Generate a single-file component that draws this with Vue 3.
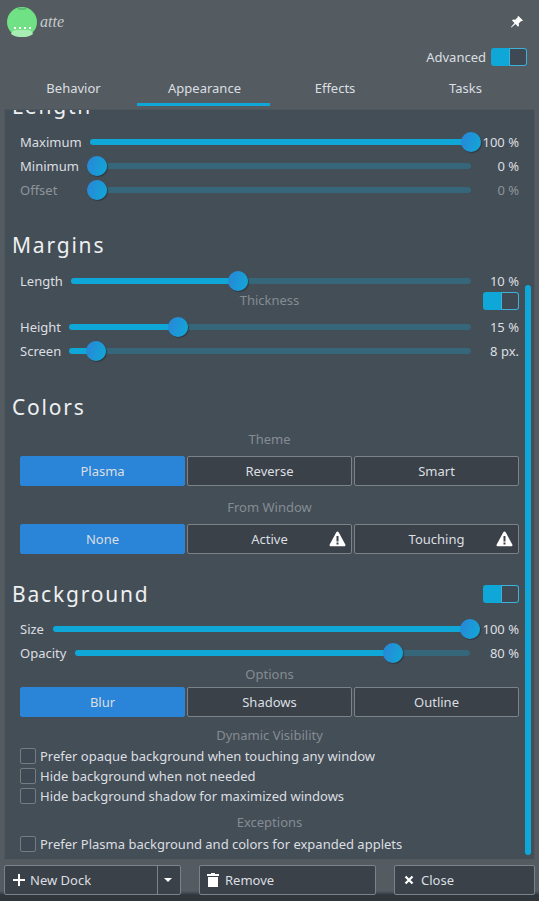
<template>
  <div class="fenetre">
    <!-- titre + épingle -->
    <div class="entete">
      <div class="logo">
        <svg width="32" height="32" viewBox="0 0 32 32">
          <circle cx="16" cy="16" r="15" fill="#70e285" />
          <path d="M11 2.500h10l-2 1h-6z" fill="#4f9c5c" />
          <path d="M5 28c1-3 3-4 5-4h12c2 0 4 1 5 4-3 2.500-7 3-11 3s-8-.5-11-3z" fill="#a8eeb4" />
          <g fill="#fff">
            <rect x="8" y="21" width="2" height="2" />
            <rect x="13" y="21" width="2" height="2" />
            <rect x="18" y="21" width="2" height="2" />
            <rect x="23" y="21" width="2" height="2" />
          </g>
        </svg>
        <span class="logo-texte">atte</span>
      </div>
      <svg class="epingle" width="14" height="14" viewBox="0 0 14 14">
        <path d="M8.500 1l4.500 4.500-1 .8-.8-.3-2.500 2.500.3 2.200-1 1-2.500-2.700L1.500 12.500 1 12l3.500-4L2 5.500l1-1 2.200.3L7.700 2.300 7.500 1.800z" fill="#fff" />
      </svg>
    </div>

    <div class="ligne-avance">
      <span>Advanced</span>
      <span class="bascule"><i></i></span>
    </div>

    <div class="onglets">
      <div v-for="o in onglets" :key="o" class="onglet" :class="{ actif: o === 'Appearance' }">{{ o }}</div>
    </div>

    <div class="panneau">
      <div class="defile">
        <h2 class="titre-length">Length</h2>
        <div v-for="s in sLength" :key="s.nom" class="curseur large" :class="{ inactif: s.off }">
          <span class="nom">{{ s.nom }}</span>
          <div class="piste">
            <div class="plein" :style="{ width: s.pos * 100 + '%' }"></div>
            <div class="poignee" :style="{ left: s.pos * 100 + '%' }"></div>
          </div>
          <span class="val">{{ s.val }}</span>
        </div>

        <h2 class="titre-margins">Margins</h2>
        <div class="curseur">
          <span class="nom">Length</span>
          <div class="piste">
            <div class="plein" :style="{ width: longueur * 100 + '%' }"></div>
            <div class="poignee" :style="{ left: longueur * 100 + '%' }"></div>
          </div>
          <span class="val">10 %</span>
        </div>
        <div class="ligne-thick">
          <span class="sous">Thickness</span>
          <span class="bascule"><i></i></span>
        </div>
        <div v-for="s in sMargins" :key="s.nom" class="curseur">
          <span class="nom">{{ s.nom }}</span>
          <div class="piste">
            <div class="plein" :style="{ width: s.pos * 100 + '%' }"></div>
            <div class="poignee" :style="{ left: s.pos * 100 + '%' }"></div>
          </div>
          <span class="val">{{ s.val }}</span>
        </div>

        <h2 class="titre-colors">Colors</h2>
        <div class="sous sous-theme">Theme</div>
        <div class="groupe">
          <div class="bouton on">Plasma</div>
          <div class="bouton">Reverse</div>
          <div class="bouton">Smart</div>
        </div>
        <div class="sous sous-window">From Window</div>
        <div class="groupe">
          <div class="bouton on">None</div>
          <div v-for="b in ['Active', 'Touching']" :key="b" class="bouton">
            {{ b }}
            <svg class="alerte" width="17" height="16" viewBox="0 0 17 16">
              <path d="M8.500.5c.5 0 .9.3 1.200.8l6.600 12.200c.4.800 0 1.800-1 1.800H1.700c-1 0-1.400-1-1-1.800L7.300 1.300c.3-.5.700-.8 1.200-.8z" fill="#fff" />
              <rect x="7.500" y="5" width="2" height="5.500" fill="#3a4149" />
              <rect x="7.500" y="11.500" width="2" height="2" fill="#3a4149" />
            </svg>
          </div>
        </div>

        <div class="ligne-bg">
          <h2>Background</h2>
          <span class="bascule"><i></i></span>
        </div>
        <div v-for="s in sBackground" :key="s.nom" class="curseur fond">
          <span class="nom">{{ s.nom }}</span>
          <div class="piste">
            <div class="plein" :style="{ width: s.pos * 100 + '%' }"></div>
            <div class="poignee" :style="{ left: s.pos * 100 + '%' }"></div>
          </div>
          <span class="val">{{ s.val }}</span>
        </div>
        <div class="sous sous-options">Options</div>
        <div class="groupe">
          <div class="bouton on">Blur</div>
          <div class="bouton">Shadows</div>
          <div class="bouton">Outline</div>
        </div>
        <div class="sous sous-dyn">Dynamic Visibility</div>
        <label v-for="c in cases" :key="c" class="case"><i></i>{{ c }}</label>
        <div class="sous sous-exc">Exceptions</div>
        <label class="case"><i></i>Prefer Plasma background and colors for expanded applets</label>
      </div>
      <div class="barre"></div>
    </div>

    <div class="pied">
      <div class="btn btn-new">
        <div class="btn-main">
          <svg width="14" height="14" viewBox="0 0 14 14"><path d="M6 1h2v5h5v2H8v5H6V8H1V6h5z" fill="#fff" /></svg>
          New Dock
        </div>
        <div class="btn-fleche"><span></span></div>
      </div>
      <div class="btn btn-remove">
        <svg width="14" height="14" viewBox="0 0 14 14">
          <path d="M5 0h4v1h4v2H1V1h4zM2 4h10v10H2z" fill="#fff" />
        </svg>
        Remove
      </div>
      <div class="btn btn-close">
        <svg width="10" height="10" viewBox="0 0 10 10">
          <path d="M1.500 1.500l7 7M8.500 1.500l-7 7" stroke="#fff" stroke-width="2.200" fill="none" />
        </svg>
        Close
      </div>
    </div>
  </div>
</template>

<script setup>
// Réglages de l'onglet Appearance ; pos = position de la poignée sur la piste
const onglets = ['Behavior', 'Appearance', 'Effects', 'Tasks']

const sLength = [
  { nom: 'Maximum', pos: 1, val: '100 %' },
  { nom: 'Minimum', pos: 0.018, val: '0 %' },
  { nom: 'Offset', pos: 0.018, val: '0 %', off: true },
]

const longueur = 0.4175

const sMargins = [
  { nom: 'Height', pos: 0.271, val: '15 %' },
  { nom: 'Screen', pos: 0.0675, val: '8 px.' },
]

const sBackground = [
  { nom: 'Size', pos: 1, val: '100 %' },
  { nom: 'Opacity', pos: 0.8046, val: '80 %' },
]

const cases = [
  'Prefer opaque background when touching any window',
  'Hide background when not needed',
  'Hide background shadow for maximized windows',
]
</script>

<style>
html,
body {
  margin: 0;
  background: #545c61;
}
</style>

<style scoped>
.fenetre {
  width: 539px;
  height: 901px;
  overflow: hidden;
  background: #545c61;
  font-family: "Noto Sans", sans-serif;
  font-size: 13px;
  color: #dcdfe1;
  display: flex;
  flex-direction: column;
  box-sizing: border-box;
}

.entete {
  height: 44px;
  padding: 6px 15px 0 6px;
  display: flex;
  justify-content: space-between;
  align-items: flex-start;
  box-sizing: border-box;
}

.logo {
  display: flex;
  align-items: center;
  height: 32px;
}

.logo-texte {
  font-family: "Liberation Serif", serif;
  font-style: italic;
  font-size: 16px;
  color: #c6cacc;
  margin-left: 2px;
  margin-top: -1px;
}

.epingle {
  margin-top: 9px;
}

.ligne-avance {
  height: 26px;
  padding-right: 12px;
  display: flex;
  justify-content: flex-end;
  align-items: center;
  gap: 5px;
}

.bascule {
  width: 36px;
  height: 18px;
  box-sizing: border-box;
  background: #0fa7d8;
  border-radius: 3px;
  display: flex;
  justify-content: flex-end;
  overflow: hidden;
}

.bascule i {
  width: 18px;
  height: 18px;
  box-sizing: border-box;
  border: 1px solid #3fb2dc;
  background: #3f4954;
  border-radius: 0 3px 3px 0;
}

.onglets {
  height: 39px;
  padding: 0 8px 0 8px;
  display: grid;
  grid-template-columns: 129px 133px 130px 131px;
  box-sizing: border-box;
}

.onglet {
  text-align: center;
  line-height: 36px;
  box-sizing: border-box;
}

.onglet:nth-child(-n + 2) {
  padding-left: 2px;
}

.onglet.actif {
  border-bottom: 3px solid #0fa7d8;
  height: 36px;
  line-height: 37px;
}

.panneau {
  position: relative;
  height: 751px;
  margin: 0 4px;
  background: #444e57;
  border: 1px solid #4d565c;
  border-bottom-color: #525a60;
  box-sizing: border-box;
  overflow: hidden;
}

.defile {
  /* contenu défilé : le titre du haut est coupé */
  margin-top: -18px;
  padding: 0 15px 0 7px;
}

h2 {
  margin: 0;
  font-weight: 400;
  font-size: 21px;
  line-height: 28px;
  letter-spacing: 1.8px;
  color: #eef0f1;
}

.titre-length {
  margin-bottom: 10px;
}

.titre-margins {
  margin-top: 29px;
  margin-bottom: 10px;
}

.titre-colors {
  margin-top: 30px;
  margin-bottom: 9px;
}

.curseur {
  height: 24px;
  padding-left: 8px;
  display: flex;
  align-items: center;
}

.curseur .nom {
  margin-right: 8px;
  white-space: nowrap;
}

.curseur.large .nom {
  width: 61px;
  margin-right: 9px;
}

.curseur.fond .nom {
  margin-right: 9px;
}

.curseur.inactif {
  color: #8d9499;
}

.piste {
  flex: 1;
  height: 6px;
  border-radius: 3px;
  background: #356679;
  position: relative;
}

.plein {
  height: 6px;
  border-radius: 3px;
  background: #0fa7d8;
}

.poignee {
  position: absolute;
  top: -7px;
  width: 20px;
  height: 20px;
  margin-left: -10px;
  border-radius: 50%;
  background: linear-gradient(110deg, #2a84d8, #10a9d6);
  box-shadow: 1px 1px 1px rgba(30, 36, 42, 0.55);
}

.val {
  width: 48px;
  text-align: right;
  white-space: nowrap;
}

.curseur.fond .val {
  width: 49px;
}

.sous {
  color: #848c92;
  text-align: center;
  margin-left: 8px;
}

.ligne-thick {
  height: 22px;
  position: relative;
  display: flex;
  justify-content: center;
  align-items: flex-start;
  line-height: 15px;
}

.ligne-thick .bascule {
  position: absolute;
  right: 0;
  top: -1px;
}

.sous-theme {
  line-height: 18px;
  margin-bottom: 8px;
}

.sous-window {
  line-height: 18px;
  margin-top: 12px;
  margin-bottom: 8px;
}

.groupe {
  margin-left: 8px;
  display: grid;
  grid-template-columns: repeat(3, 165px);
  gap: 2px;
}

.bouton {
  height: 30px;
  line-height: 28px;
  text-align: center;
  box-sizing: border-box;
  border: 1px solid #7b8388;
  border-radius: 2px;
  background: #3a4149;
  position: relative;
}

.bouton.on {
  background: #2a84d8;
  border-color: #2a84d8;
}

.alerte {
  position: absolute;
  right: 5px;
  top: 6px;
}

.ligne-bg {
  display: flex;
  justify-content: space-between;
  align-items: center;
  margin-top: 26px;
  margin-bottom: 9px;
}

.sous-options {
  line-height: 18px;
  margin-bottom: 4px;
}

.sous-dyn {
  line-height: 18px;
  margin-top: 9px;
  margin-bottom: 2px;
}

.sous-exc {
  line-height: 18px;
  margin-top: 7px;
  margin-bottom: 3px;
}

.case {
  height: 20px;
  padding-left: 8px;
  display: flex;
  align-items: center;
  gap: 4px;
}

.case i {
  width: 16px;
  height: 16px;
  box-sizing: border-box;
  border: 1px solid #747c82;
  border-radius: 2px;
  background: #3f4954;
}

.barre {
  position: absolute;
  right: 3px;
  top: 175px;
  bottom: 4px;
  width: 6px;
  border-radius: 3px;
  background: #0fa7d8;
}

.pied {
  height: 41px;
  padding: 5px 4px 0;
  display: flex;
  box-sizing: border-box;
  background: linear-gradient(#545c61 0, #545c61 31px, #2f363c 35px);
}

.btn {
  height: 30px;
  box-sizing: border-box;
  border: 1px solid #7b8388;
  border-radius: 2px;
  background: #3a4149;
  display: flex;
  align-items: center;
}

.btn-new {
  width: 177px;
}

.btn-main {
  flex: 1;
  display: flex;
  align-items: center;
  gap: 4px;
  padding-left: 7px;
}

.btn-fleche {
  width: 19px;
  height: 100%;
  border-left: 1px solid #7b8388;
  padding-right: 3px;
  box-sizing: content-box;
  display: flex;
  align-items: center;
  justify-content: center;
}

.btn-fleche span {
  border-left: 4px solid transparent;
  border-right: 4px solid transparent;
  border-top: 4px solid #fff;
}

.btn-remove {
  width: 177px;
  margin-left: 18px;
  gap: 5px;
  padding-left: 6px;
}

.btn-close {
  width: 141px;
  margin-left: 18px;
  gap: 7px;
  padding-left: 9px;
}
</style>
